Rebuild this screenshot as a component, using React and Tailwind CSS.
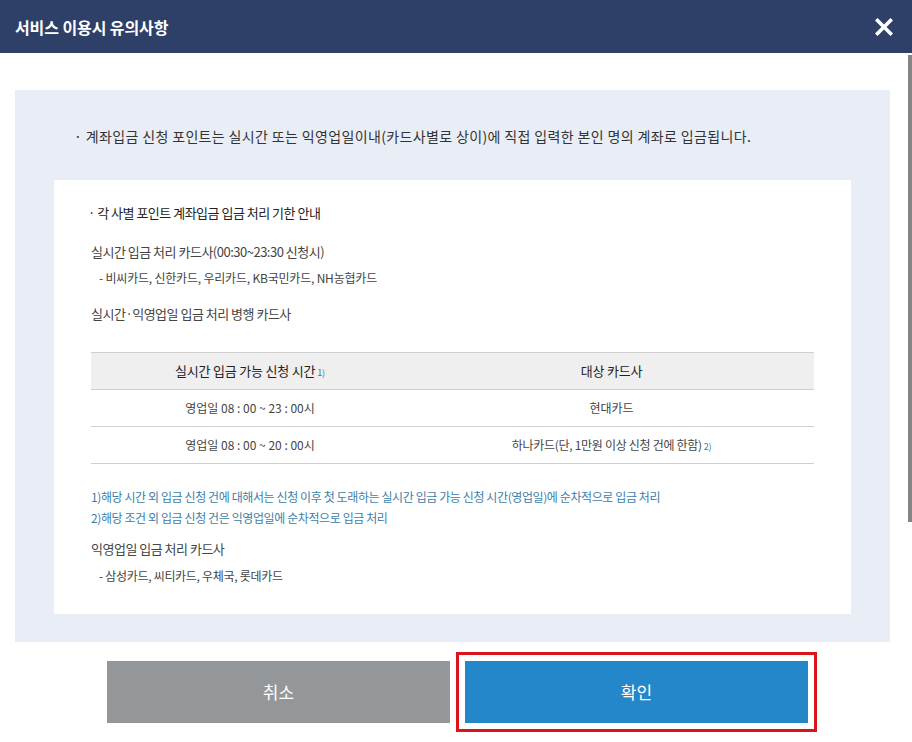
import React from "react";

const font = { fontFamily: '"Noto Sans CJK KR", "Noto Sans", sans-serif' };

export default function App() {
  return (
    <div className="relative w-[912px] h-[742px] bg-white overflow-hidden" style={font}>
      <div className="h-[53px] bg-[#2e4068] flex items-center justify-between pl-[15px] pr-[19px]">
        <div className="text-white text-[16px] font-bold tracking-[-0.1px] leading-none">서비스 이용시 유의사항</div>
        <svg width="18" height="18" viewBox="0 0 18 18" className="mt-[1px]">
          <path d="M2.5 2.5 L15.5 15.5 M15.5 2.5 L2.5 15.5" stroke="#fff" strokeWidth="3.6" strokeLinecap="square" />
        </svg>
      </div>

      <div className="pt-[37px] pl-[15px] pr-[22px]">
        <div className="bg-[#e9eef6] px-[39px] pt-[36px] pb-[28px]">
          <div className="text-[14px] leading-[20px] text-[#333] tracking-[0.36px] pl-[20px] mb-[34px]">
            · 계좌입금 신청 포인트는 실시간 또는 익영업일이내(카드사별로 상이)에 직접 입력한 본인 명의 계좌로 입금됩니다.
          </div>
          <div className="bg-white pl-[37px] pr-[37px] pt-[23px] pb-[29px] text-[#444] tracking-[-0.5px]">
            <div className="text-[13px] leading-[20px] text-[#222] -ml-[3px]">· 각 사별 포인트 계좌입금 입금 처리 기한 안내</div>
            <div className="text-[13px] leading-[20px] mt-[19px]">실시간 입금 처리 카드사(00:30~23:30 신청시)</div>
            <div className="text-[12px] leading-[18px] mt-[7px] pl-[8px] tracking-[-0.2px]">- 비씨카드, 신한카드, 우리카드, KB국민카드, NH농협카드</div>
            <div className="text-[13px] leading-[20px] mt-[17px]">실시간·익영업일 입금 처리 병행 카드사</div>

            <div className="mt-[28px] border-t border-[#cfcfcf] text-center">
              <div className="flex bg-[#efefef] h-[37px] items-center border-b border-[#cfcfcf] text-[13px] text-[#222] tracking-[-0.2px]">
                <div className="w-[318px]">
                  실시간 입금 가능 신청 시간<span className="text-[9px] text-[#3a78b5] ml-[2px]">1)</span>
                </div>
                <div className="flex-1">대상 카드사</div>
              </div>
              <div className="flex h-[37px] items-center border-b border-[#cfcfcf] text-[12px] tracking-[0px]">
                <div className="w-[318px]">영업일 08 : 00 ~ 23 : 00시</div>
                <div className="flex-1">현대카드</div>
              </div>
              <div className="flex h-[37px] items-center border-b border-[#cfcfcf] text-[12px] tracking-[-0.3px]">
                <div className="w-[318px] tracking-[0px]">영업일 08 : 00 ~ 20 : 00시</div>
                <div className="flex-1">
                  하나카드(단, 1만원 이상 신청 건에 한함)<span className="text-[9px] text-[#3a78b5] ml-[2px]">2)</span>
                </div>
              </div>
            </div>

            <div className="mt-[22px] text-[12px] leading-[21px] text-[#3d7ea8] tracking-[-0.4px]">
              <div>1)해당 시간 외 입금 신청 건에 대해서는 신청 이후 첫 도래하는 실시간 입금 가능 신청 시간(영업일)에 순차적으로 입금 처리</div>
              <div>2)해당 조건 외 입금 신청 건은 익영업일에 순차적으로 입금 처리</div>
            </div>
            <div className="text-[13px] leading-[20px] mt-[11px]">익영업일 입금 처리 카드사</div>
            <div className="text-[12px] leading-[18px] mt-[8px] pl-[8px] tracking-[-0.3px]">- 삼성카드, 씨티카드, 우체국, 롯데카드</div>
          </div>
        </div>
      </div>

      <div className="flex items-center pl-[107px] mt-[10px]">
        <button className="w-[343px] h-[62px] bg-[#949799] text-white text-[17px] mr-[6px]">취소</button>
        <div className="border-[3px] border-[#d9141b] p-[6px]">
          <button className="w-[343px] h-[62px] bg-[#2387c9] text-white text-[17px] block">확인</button>
        </div>
      </div>

      <div className="absolute right-0 top-[55px] w-[4px] h-[467px] bg-[#858585]" />
    </div>
  );
}
